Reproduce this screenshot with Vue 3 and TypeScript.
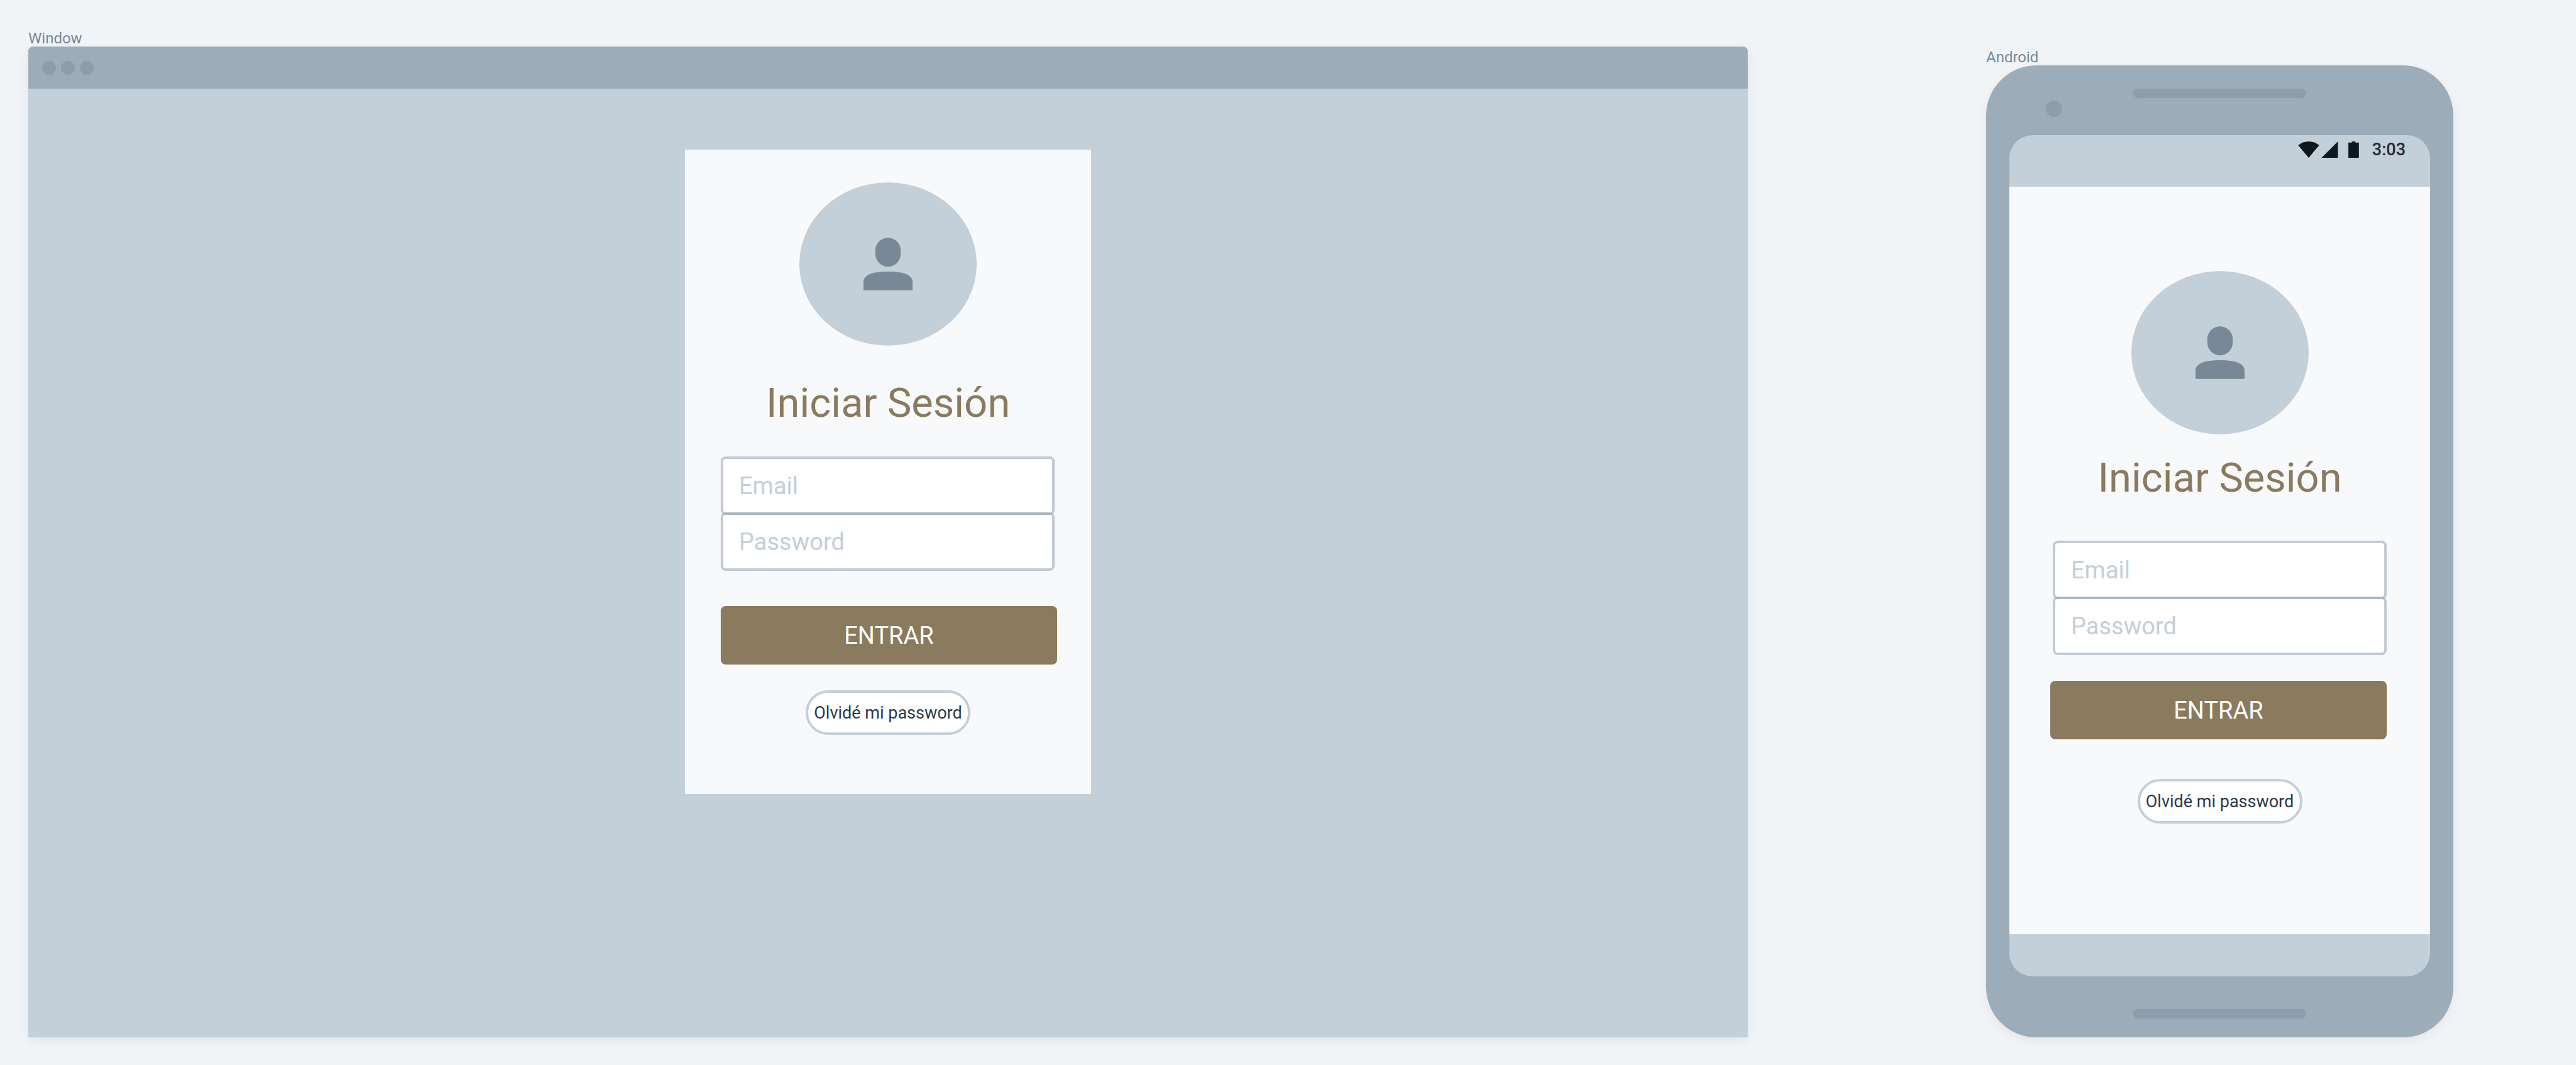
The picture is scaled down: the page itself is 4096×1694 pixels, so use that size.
<script setup lang="ts">
import { h, type FunctionalComponent } from 'vue'

interface Device {
  id: 'desktop' | 'mobile'
  label: string
}

const desktop: Device = { id: 'desktop', label: 'Window' }
const mobile: Device = { id: 'mobile', label: 'Android' }

const dots = [1, 2, 3]

const Avatar: FunctionalComponent = () =>
  h('svg', { viewBox: '0 0 304 280', width: 282, height: 260, 'aria-hidden': 'true' }, [
    h('ellipse', { cx: 152, cy: 140, rx: 152, ry: 140, fill: '#c3cfd9' }),
    h('path', {
      fill: '#788896',
      d: 'M152 95c12 0 21.700 9.500 21.700 21.500v6c0 12-9.700 22-21.700 22s-21.700-10-21.700-22v-6c0-12 9.700-21.500 21.700-21.500z',
    }),
    h('path', {
      fill: '#788896',
      d: 'M152 153c30 0 42 7 42 18v13q0 1-1 1h-82q-1 0-1-1v-13c0-11 12-18 42-18z',
    }),
  ])
</script>

<template>
  <main class="board">
    <section class="device device-window">
      <h2 class="caption">{{ desktop.label }}</h2>
      <div class="window">
        <header class="titlebar">
          <span v-for="dot in dots" :key="dot" class="dot"></span>
        </header>
        <div class="viewport">
          <div class="panel card">
            <Avatar />
            <h1 class="title">Iniciar Sesión</h1>
            <form class="form" @submit.prevent>
              <div class="fields">
                <input class="field" type="email" placeholder="Email" aria-label="Email" />
                <input class="field" type="password" placeholder="Password" aria-label="Password" />
              </div>
              <button class="submit" type="submit">ENTRAR</button>
            </form>
            <button class="pill" type="button">Olvidé mi password</button>
          </div>
        </div>
      </div>
    </section>

    <section class="device device-phone">
      <h2 class="caption">{{ mobile.label }}</h2>
      <div class="phone">
        <div class="bezel-top">
          <span class="camera"></span>
          <span class="speaker"></span>
        </div>
        <div class="screen">
          <div class="status">
            <svg class="signals" viewBox="0 0 104 28" width="97" height="26" aria-hidden="true">
              <path d="M0 6.500Q8 0 18 0t18 6.500L18 28z" />
              <path d="M40 28L68 0v28z" />
              <path d="M86 2h6V0h6v2h6v26H86z" />
            </svg>
            <time class="clock">3:03</time>
          </div>
          <div class="panel app">
            <Avatar />
            <h1 class="title">Iniciar Sesión</h1>
            <form class="form" @submit.prevent>
              <div class="fields">
                <input class="field" type="email" placeholder="Email" aria-label="Email" />
                <input class="field" type="password" placeholder="Password" aria-label="Password" />
              </div>
              <button class="submit" type="submit">ENTRAR</button>
            </form>
            <button class="pill" type="button">Olvidé mi password</button>
          </div>
          <div class="navbar"></div>
        </div>
        <div class="bezel-bottom">
          <span class="speaker"></span>
        </div>
      </div>
    </section>
  </main>
</template>

<style>
body {
  margin: 0;
  background: #f0f4f7;
}
</style>

<style scoped>
.board {
  box-sizing: border-box;
  display: flex;
  align-items: stretch;
  gap: 379px;
  min-height: 100vh;
  padding: 48px 195px 44px 45px;
  font-family: Roboto, "Liberation Sans", sans-serif;
}

.device {
  display: flex;
  flex-direction: column;
}

.device-window {
  flex: 1;
}

.device-phone {
  flex: none;
  width: 743px;
  padding-top: 30px;
}

.caption {
  margin: 0;
  font-size: 24px;
  line-height: 26px;
  font-weight: 400;
  color: #788896;
}

.window {
  flex: 1;
  display: flex;
  flex-direction: column;
  background: #c3cfd9;
  border-radius: 8px 8px 0 0;
  box-shadow: 0 6px 15px rgba(0, 0, 0, 0.06);
}

.titlebar {
  display: flex;
  align-items: center;
  gap: 8px;
  height: 67px;
  padding: 0 22px;
  background: #9dacb9;
  border-radius: 8px 8px 0 0;
}

.dot {
  width: 22px;
  height: 22px;
  border-radius: 50%;
  background: #8d9dac;
}

.viewport {
  display: flex;
  justify-content: center;
  padding: 97px 0;
}

.panel {
  box-sizing: border-box;
  display: flex;
  flex-direction: column;
  align-items: center;
  background: #f8f9fb;
}

.card {
  width: 646px;
  padding: 52px 0 94px;
}

.title {
  margin: 59px 0 53px;
  font-size: 65px;
  line-height: 64px;
  font-weight: 400;
  color: #8a7a5e;
}

.form {
  display: flex;
  flex-direction: column;
  align-self: stretch;
  gap: 56px;
  margin: 0 54px 41px 57px;
}

.fields {
  display: flex;
  flex-direction: column;
  padding-right: 4px;
}

.field {
  box-sizing: border-box;
  width: 100%;
  height: 93px;
  margin: 0;
  padding: 0 25px;
  border: 4px solid rgba(152, 166, 182, 0.56);
  border-radius: 8px;
  background: #ffffff;
  background-clip: padding-box;
  font: inherit;
  font-size: 38px;
  color: #2c3a49;
  outline: none;
}

.field + .field {
  margin-top: -4px;
}

.field::placeholder {
  color: #c3cfd9;
  opacity: 1;
}

.submit {
  height: 93px;
  padding: 0;
  border: 0;
  border-radius: 8px;
  background: #8a7a5e;
  font: inherit;
  font-size: 38px;
  color: #ffffff;
}

.pill {
  box-sizing: border-box;
  width: 262px;
  height: 71px;
  padding: 0;
  border: 4px solid #c3cfd9;
  border-radius: 36px;
  background: #ffffff;
  font: inherit;
  font-size: 27px;
  color: #2c3a49;
  white-space: nowrap;
}

.phone {
  flex: 1;
  display: flex;
  flex-direction: column;
  padding: 0 37px;
  border-radius: 80px;
  background: #9dacb9;
  box-shadow: 0 6px 15px rgba(0, 0, 0, 0.06);
}

.bezel-top {
  display: grid;
  grid-template-columns: 1fr 275px 1fr;
  height: 111px;
}

.camera {
  width: 26px;
  height: 26px;
  margin: 56px 0 0 58px;
  border-radius: 50%;
  background: #8d9dac;
}

.speaker {
  width: 275px;
  height: 15px;
  border-radius: 8px;
  background: #8d9dac;
}

.bezel-top .speaker {
  margin-top: 37px;
}

.screen {
  flex: 1;
  display: flex;
  flex-direction: column;
  border-radius: 37px;
  background: #c3cfd9;
  overflow: hidden;
}

.status {
  box-sizing: border-box;
  display: flex;
  justify-content: flex-end;
  gap: 21px;
  height: 82px;
  padding: 10px 39px 0 0;
}

.signals {
  fill: #0f171e;
}

.clock {
  font-size: 27px;
  line-height: 26px;
  font-weight: 500;
  color: #1f2933;
}

.app {
  flex: 1;
  padding-top: 134px;
}

.app .title {
  margin: 37px 0 68px;
}

.app .form {
  gap: 41px;
  margin: 0 69px 63px 65px;
}

.app .fields {
  padding: 0 0 0 4px;
}

.navbar {
  height: 67px;
}

.bezel-bottom {
  display: flex;
  justify-content: center;
  height: 45px;
  padding-top: 52px;
}
</style>
